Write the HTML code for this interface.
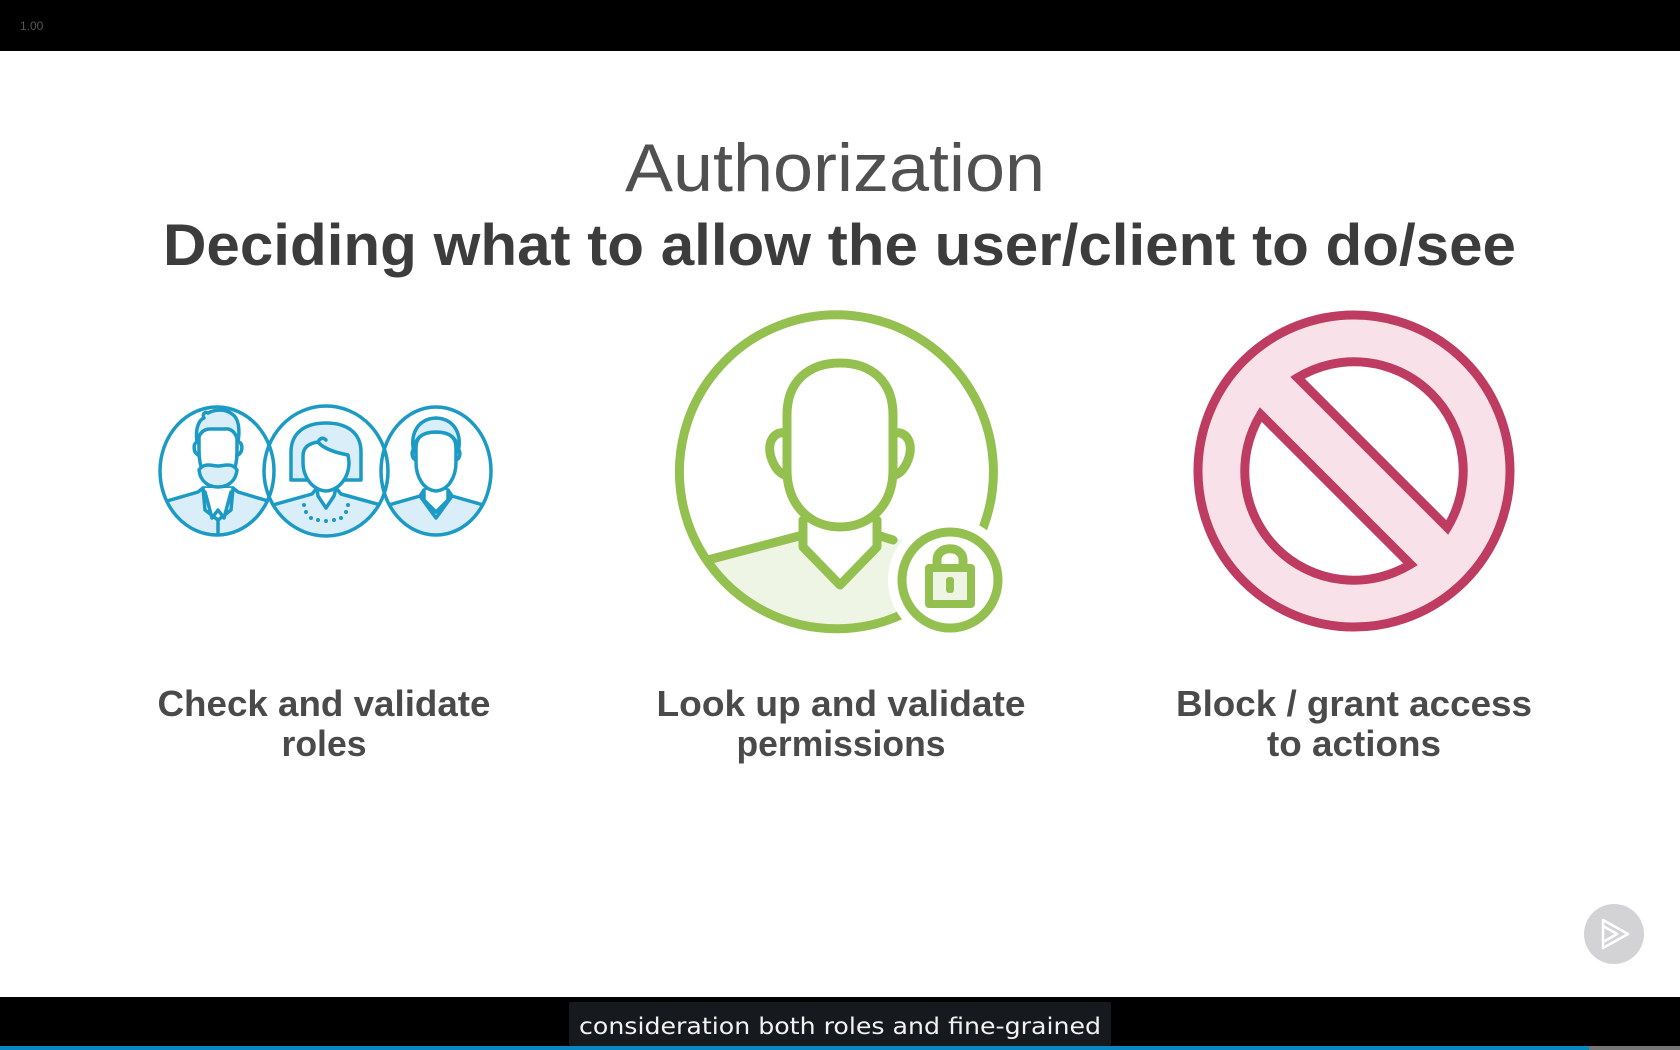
<!DOCTYPE html>
<html><head><meta charset="utf-8"><style>
html,body{margin:0;padding:0;background:#fff;width:1680px;height:1050px;overflow:hidden}
svg{display:block}
</style></head><body>
<svg width="1680" height="1050" viewBox="0 0 1680 1050" xmlns="http://www.w3.org/2000/svg">
<defs>
<clipPath id="cb1"><ellipse cx="217" cy="471" rx="57" ry="64"/></clipPath>
<clipPath id="cb2"><ellipse cx="326" cy="471" rx="62" ry="65"/></clipPath>
<clipPath id="cb3"><ellipse cx="436" cy="471" rx="55" ry="64"/></clipPath>
<clipPath id="cg"><circle cx="840" cy="471" r="157"/></clipPath>
</defs>
<rect width="1680" height="1050" fill="#fff"/>
<rect width="1680" height="51" fill="#000"/>
<text x="20" y="30" font-family="Liberation Sans, sans-serif" font-size="12" fill="#555">1.00</text>

<text x="835" y="191" text-anchor="middle" font-family="Liberation Sans, sans-serif" font-size="68" fill="#505050" textLength="420" lengthAdjust="spacingAndGlyphs">Authorization</text>
<text x="163" y="265" font-family="Liberation Sans, sans-serif" font-weight="bold" font-size="58" fill="#3c3c3c" textLength="1353" lengthAdjust="spacingAndGlyphs">Deciding what to allow the user/client to do/see</text>

<!-- blue people -->
<g fill="none" stroke="#1b9ac6" stroke-width="3.5" stroke-linejoin="round" stroke-linecap="round">
 <g clip-path="url(#cb1)">
  <path d="M150 506 L198 492 L203 488 L233 488 L238 492 L285 506 V545 H150Z" fill="#d9eef8"/>
  <path d="M203 488 L205 510 L218 520 L231 510 L233 488" fill="#fff"/>
  <path d="M205 492 L212 518 L218 510 L224 518 L231 492 M218 520 V545"/>
 </g>
 <ellipse cx="217" cy="471" rx="57" ry="64"/>
 <path d="M199 450 V437 C199 428 204 424 212 425 L224 425 C232 424 237 428 237 437 V452 C237 468 231 484 218 485 C205 484 199 468 199 450Z" fill="#fff"/>
 <path d="M199 470 C204 462 212 466 218 466 C224 466 232 462 237 470 C236 480 229 487 218 487 C207 487 200 480 199 470Z" fill="#d9eef8"/>
 <path d="M197 442 C195 428 199 420 204 418 C202 414 205 411 208 413 C216 409 226 409 232 414 C239 418 240 430 238 442 C236 432 231 428 224 429 L210 429 C203 429 199 434 197 442Z" fill="#d9eef8"/>
 <path d="M197 442 C193 444 193 452 198 455 M239 442 C243 444 243 452 238 455"/>

 <g clip-path="url(#cb2)">
  <path d="M262 508 L312 494 L317 488 L336 488 L341 494 L392 508 V545 H262Z" fill="#d9eef8"/>
  <path d="M317 488 L318 496 L326 508 L334 496 L336 488" fill="#fff"/>
 </g>
 <ellipse cx="326" cy="471" rx="62" ry="65"/>
 <path d="M291 480 V452 C291 432 306 423 326 423 C346 423 361 432 361 452 V480Z" fill="#d9eef8"/>
 <path d="M303 456 C303 446 311 443 318 442 C322 447 332 452 348 455 L349 462 C349 478 339 490 326 491 C313 490 303 478 303 462Z" fill="#fff"/>
 <path d="M318 442 C320 438 323 437 326 440"/>
 <g fill="#1b9ac6" stroke="none">
  <circle cx="304" cy="505" r="2"/><circle cx="306" cy="512" r="2"/><circle cx="311" cy="518" r="2"/><circle cx="318" cy="520" r="2"/><circle cx="326" cy="521" r="2"/><circle cx="334" cy="520" r="2"/><circle cx="341" cy="518" r="2"/><circle cx="346" cy="512" r="2"/><circle cx="348" cy="505" r="2"/>
 </g>

 <g clip-path="url(#cb3)">
  <path d="M378 508 L420 496 L424 490 L448 490 L452 496 L494 508 V545 H378Z" fill="#d9eef8"/>
  <path d="M424 490 L424 500 L436 512 L448 500 L448 490" fill="#fff"/>
  <path d="M420 496 L436 518 L452 496"/>
 </g>
 <ellipse cx="436" cy="471" rx="55" ry="64"/>
 <path d="M416 448 C416 436 424 432 436 432 C448 432 456 436 456 448 V462 C456 478 448 490 436 491 C424 490 416 478 416 462Z" fill="#fff"/>
 <path d="M414 452 C410 436 416 419 436 418 C456 419 462 436 458 452 C458 440 452 432 436 432 C420 432 414 440 414 452Z" fill="#d9eef8"/>
 <path d="M415 448 C411 450 411 458 416 460 M457 448 C461 450 461 458 456 460"/>
</g>

<!-- green person -->
<g fill="none" stroke="#94c050" stroke-width="9" stroke-linejoin="round" stroke-linecap="round">
 <g clip-path="url(#cg)">
  <path d="M700 562 L803 535 L803 547 L840 585 L877 547 L877 535 L1000 560 V650 H700Z" fill="#eef5e5" stroke="none"/>
  <path d="M700 562 L803 535"/>
  <path d="M877 535 L893 540"/>
 </g>
 <path d="M983 528 A157 157 0 1 0 905 613" />
 <path d="M787 433 C772 430 766 445 772 460 C775 468 780 474 787 476" />
 <path d="M893 433 C908 430 914 445 908 460 C905 468 900 474 893 476" />
 <path d="M787 470 V415 C787 380 810 363 840 363 C870 363 893 380 893 415 V470 C893 505 870 527 840 527 C810 527 787 505 787 470Z" fill="#fff"/>
 <path d="M803 520 V547 L840 585 L877 547 V520"/>
 <circle cx="950" cy="580" r="62" fill="#fff" stroke="none"/>
 <circle cx="950" cy="580" r="48"/>
 <path d="M937 567 V560 C937 545 963 545 963 560 V567" stroke-width="9"/>
 <rect x="929" y="568" width="42" height="36" fill="#eef5e5" stroke-width="8"/>
 <rect x="946" y="577" width="8" height="16" rx="3" fill="#94c050" stroke="none"/>
</g>

<!-- red prohibition -->
<g transform="translate(1354,471)" stroke="#be3b61" stroke-width="9" stroke-linejoin="miter">
 <circle r="156" fill="#f8e1e8"/>
 <path d="M-56.5 -93.3 A109 109 0 0 1 93.3 56.5 Z" fill="#fff"/>
 <path d="M56.5 93.3 A109 109 0 0 1 -93.3 -56.5 Z" fill="#fff"/>
</g>

<g font-family="Liberation Sans, sans-serif" font-weight="bold" font-size="36" fill="#4a4a4a" text-anchor="middle">
 <text x="324" y="716" textLength="333" lengthAdjust="spacingAndGlyphs">Check and validate</text>
 <text x="324" y="756" textLength="85" lengthAdjust="spacingAndGlyphs">roles</text>
 <text x="841" y="716" textLength="369" lengthAdjust="spacingAndGlyphs">Look up and validate</text>
 <text x="841" y="756" textLength="209" lengthAdjust="spacingAndGlyphs">permissions</text>
 <text x="1354" y="716" textLength="356" lengthAdjust="spacingAndGlyphs">Block / grant access</text>
 <text x="1354" y="756" textLength="174" lengthAdjust="spacingAndGlyphs">to actions</text>
</g>

<!-- play button -->
<circle cx="1614" cy="934" r="30" fill="#d3d3d6"/>
<g fill="none" stroke="#fff" stroke-width="2.5" stroke-linejoin="round">
 <path d="M1603 920 L1628 934 L1603 948 Z"/>
 <path d="M1603 926 L1617 934 L1603 942"/>
</g>

<rect y="997" width="1680" height="53" fill="#000"/>
<rect x="569" y="1002" width="542" height="44" rx="2" fill="#16191d"/>
<text x="840" y="1034" text-anchor="middle" font-family="DejaVu Sans, sans-serif" font-size="23" fill="#f2f2f2" textLength="522" lengthAdjust="spacingAndGlyphs">consideration both roles and fine-grained</text>
<rect y="1046" width="1589" height="4" fill="#0a87c1"/>
<rect x="1589" y="1046" width="91" height="4" fill="#777"/>
</svg>
</body></html>
